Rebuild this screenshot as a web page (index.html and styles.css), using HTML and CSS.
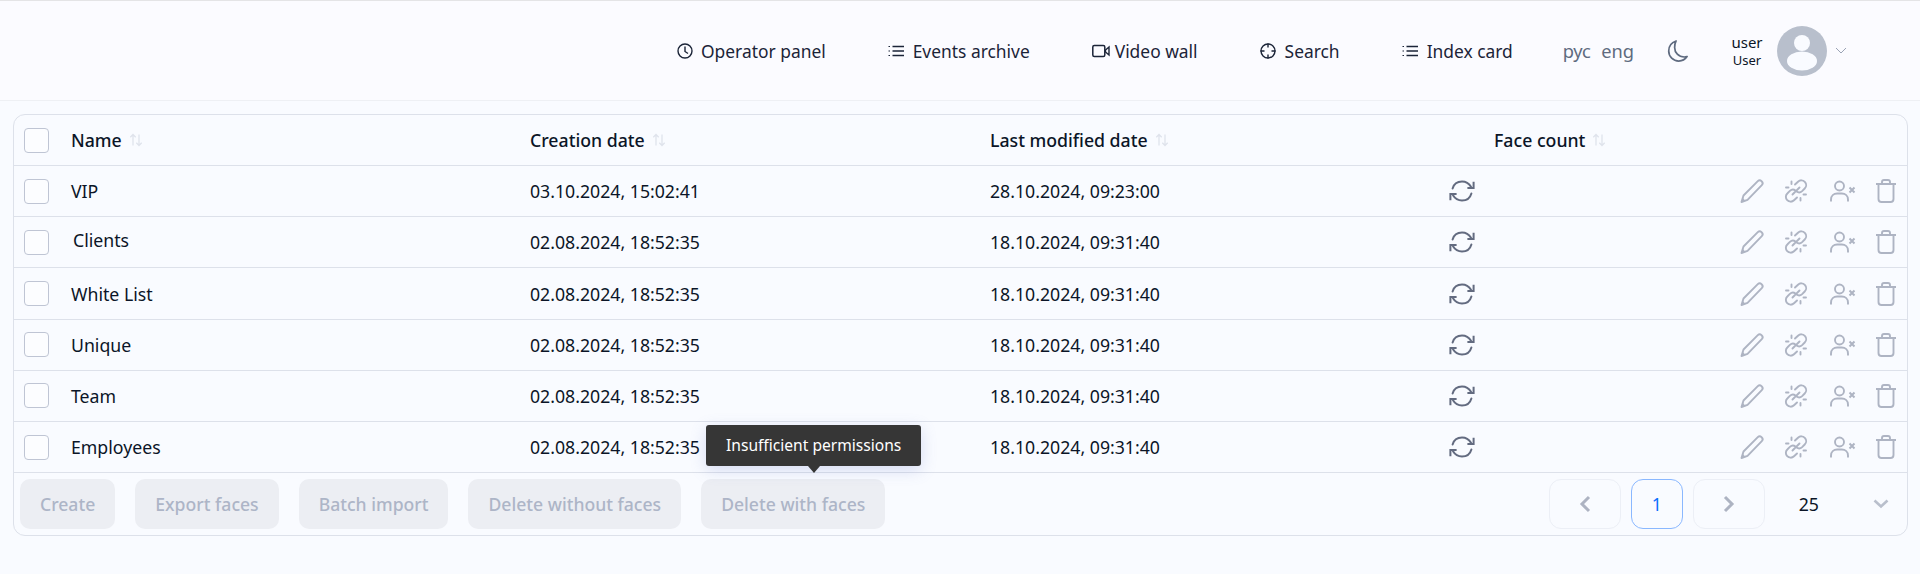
FILE: index.html
```html
<!DOCTYPE html>
<html lang="en">
<head>
<meta charset="utf-8">
<title>Face lists</title>
<link rel="stylesheet" href="styles.css">
</head>
<body>
<svg class="defs" width="0" height="0" aria-hidden="true">
  <symbol id="sort" viewBox="0 0 14 14"><path d="M4 12.5V1.5M1.3 4.2 4 1.5l2.7 2.7M10 1.5v11M7.3 9.8 10 12.5l2.7-2.7" fill="none" stroke="currentColor" stroke-width="1.3"/></symbol>
  <symbol id="sync" viewBox="0 0 26 22"><path d="M3.6 8.6C4.8 4.3 8.6 1.6 13 1.6c3.800 0 7 1.900 9 5.200M22.400 13.400c-1.200 4.300-5 7-9.400 7-3.800 0-7-1.900-9-5.200" fill="none" stroke="currentColor" stroke-width="2" stroke-linecap="round"/><path d="M24.600 1.800v6.200h-6.200M1.400 20.200v-6.200h6.200" fill="none" stroke="currentColor" stroke-width="2"/></symbol>
  <symbol id="pencil" viewBox="0 0 24 24"><path d="M1.500 23 3.500 16.500 17.800 2.200c1-1 2.700-1 3.700 0l.3.300c1 1 1 2.700 0 3.700L7.500 20.800z" fill="none" stroke="currentColor" stroke-width="1.900" stroke-linejoin="round"/><path d="M1.500 23 3 19l2 2.500z" fill="currentColor"/></symbol>
  <symbol id="unlink" viewBox="0 0 24 24"><path d="M11 5.500 14 2.700c2-1.900 5-1.800 6.800.1 1.800 1.900 1.800 4.900-.1 6.700l-2.600 2.600c-1.700 1.600-4 1.500-5.600.4M13 18.500 10 21.300c-2 1.900-5 1.800-6.800-.1-1.800-1.900-1.800-4.900.1-6.700l2.600-2.600c1.700-1.600 4-1.500 5.600-.4M15.500 8.500l-2.500 2.500M8.500 15.500l2.500-2.500M7.500 2.500V5M2 8.500h2.500M16.500 19v2.500M19.500 15.500H22" fill="none" stroke="currentColor" stroke-width="1.900" stroke-linecap="round" stroke-linejoin="round"/></symbol>
  <symbol id="userx" viewBox="0 0 26 22"><circle cx="9.500" cy="6" r="4.500" fill="none" stroke="currentColor" stroke-width="1.900"/><path d="M1 21.500v-2c0-3.600 2.700-6 6.200-6h4.600c3.500 0 6.200 2.400 6.200 6v2" fill="none" stroke="currentColor" stroke-width="1.900"/><path d="m19.500 7.500 5 5M24.500 7.500l-5 5" fill="none" stroke="currentColor" stroke-width="2"/></symbol>
  <symbol id="trash" viewBox="0 0 20 24"><path d="M2.500 5.500V20c0 1.700 1.300 3 3 3h9c1.700 0 3-1.300 3-3V5.500M0 5h20M6 4.500V3c0-1.100.9-2 2-2h4c1.100 0 2 .9 2 2v1.500" fill="none" stroke="currentColor" stroke-width="1.900"/></symbol>
  <symbol id="list" viewBox="0 0 16 12"><path d="M4.500 1.500H16M4.500 6H16M4.500 10.500H16" fill="none" stroke="currentColor" stroke-width="1.300"/><path d="M.5 1h1.500v1H.5zM.5 5.500h1.500v1H.5zM.5 10h1.500v1H.5z" fill="currentColor"/></symbol>
</svg>

<header class="topbar">
  <nav class="nav">
    <a class="nav-item nav-operator"><svg class="ic-nav" viewBox="0 0 16 16"><circle cx="8" cy="8" r="7" fill="none" stroke="currentColor" stroke-width="1.400"/><path d="M8 3.500V8.500L11 10.500" fill="none" stroke="currentColor" stroke-width="1.400"/></svg>Operator panel</a>
    <a class="nav-item nav-events"><svg class="ic-list"><use href="#list"/></svg>Events archive</a>
    <a class="nav-item nav-video"><svg class="ic-video" viewBox="0 0 18 14"><rect x=".8" y="1.500" width="12" height="11" rx="1.500" fill="none" stroke="currentColor" stroke-width="1.500"/><path d="M17 3v8l-3.500-3V6z" fill="none" stroke="currentColor" stroke-width="1.400"/></svg>Video wall</a>
    <a class="nav-item nav-search"><svg class="ic-search" viewBox="0 0 16 16"><circle cx="8" cy="8" r="7" fill="none" stroke="currentColor" stroke-width="1.400"/><path d="M8 .5v4M8 11.500v4M.5 8h4M11.500 8h4" fill="none" stroke="currentColor" stroke-width="1.400"/></svg>Search</a>
    <a class="nav-item nav-index"><svg class="ic-list"><use href="#list"/></svg>Index card</a>
  </nav>
  <div class="langs"><span>рус</span><span>eng</span></div>
  <svg class="moon" viewBox="0 0 22 24"><path d="M9.500 1.500C5 3 1.800 7 1.800 12c0 6 4.800 10.500 10.500 10.500 3.800 0 6.800-1.800 8.700-4.700-1 .3-2 .5-3 .5-5.800 0-10-4.500-10-10 0-2.500.5-4.800 1.500-6.800z" fill="none" stroke="currentColor" stroke-width="1.800" stroke-linejoin="round"/></svg>
  <div class="user"><div class="user-name">user</div><div class="user-role">User</div></div>
  <svg class="avatar" viewBox="0 0 50 50"><circle cx="25" cy="25" r="25" fill="#b8bfcc"/><circle cx="25" cy="17" r="8" fill="#f9fbff"/><ellipse cx="25" cy="35" rx="15" ry="9.500" fill="#f9fbff"/></svg>
  <svg class="user-chevron" viewBox="0 0 12 7"><path d="M1 1l5 5 5-5" fill="none" stroke="currentColor" stroke-width="1"/></svg>
</header>

<main class="main">
  <section class="panel">
    <div class="row head">
      <span class="check"></span>
      <span class="cell c-name">Name<svg class="sort"><use href="#sort"/></svg></span>
      <span class="cell c-created">Creation date<svg class="sort"><use href="#sort"/></svg></span>
      <span class="cell c-modified">Last modified date<svg class="sort"><use href="#sort"/></svg></span>
      <span class="cell c-count">Face count<svg class="sort"><use href="#sort"/></svg></span>
    </div>

    <div class="row">
      <span class="check"></span><span class="cell c-name">VIP</span><span class="cell c-created">03.10.2024, 15:02:41</span><span class="cell c-modified">28.10.2024, 09:23:00</span>
      <svg class="sync"><use href="#sync"/></svg>
      <span class="actions"><svg class="a-pencil"><use href="#pencil"/></svg><svg class="a-unlink"><use href="#unlink"/></svg><svg class="a-user"><use href="#userx"/></svg><svg class="a-trash"><use href="#trash"/></svg></span>
    </div>
    <div class="row">
      <span class="check"></span><span class="cell c-name name-shift">Clients</span><span class="cell c-created">02.08.2024, 18:52:35</span><span class="cell c-modified">18.10.2024, 09:31:40</span>
      <svg class="sync"><use href="#sync"/></svg>
      <span class="actions"><svg class="a-pencil"><use href="#pencil"/></svg><svg class="a-unlink"><use href="#unlink"/></svg><svg class="a-user"><use href="#userx"/></svg><svg class="a-trash"><use href="#trash"/></svg></span>
    </div>
    <div class="row">
      <span class="check"></span><span class="cell c-name">White List</span><span class="cell c-created">02.08.2024, 18:52:35</span><span class="cell c-modified">18.10.2024, 09:31:40</span>
      <svg class="sync"><use href="#sync"/></svg>
      <span class="actions"><svg class="a-pencil"><use href="#pencil"/></svg><svg class="a-unlink"><use href="#unlink"/></svg><svg class="a-user"><use href="#userx"/></svg><svg class="a-trash"><use href="#trash"/></svg></span>
    </div>
    <div class="row">
      <span class="check"></span><span class="cell c-name">Unique</span><span class="cell c-created">02.08.2024, 18:52:35</span><span class="cell c-modified">18.10.2024, 09:31:40</span>
      <svg class="sync"><use href="#sync"/></svg>
      <span class="actions"><svg class="a-pencil"><use href="#pencil"/></svg><svg class="a-unlink"><use href="#unlink"/></svg><svg class="a-user"><use href="#userx"/></svg><svg class="a-trash"><use href="#trash"/></svg></span>
    </div>
    <div class="row">
      <span class="check"></span><span class="cell c-name">Team</span><span class="cell c-created">02.08.2024, 18:52:35</span><span class="cell c-modified">18.10.2024, 09:31:40</span>
      <svg class="sync"><use href="#sync"/></svg>
      <span class="actions"><svg class="a-pencil"><use href="#pencil"/></svg><svg class="a-unlink"><use href="#unlink"/></svg><svg class="a-user"><use href="#userx"/></svg><svg class="a-trash"><use href="#trash"/></svg></span>
    </div>
    <div class="row">
      <span class="check"></span><span class="cell c-name">Employees</span><span class="cell c-created">02.08.2024, 18:52:35</span><span class="cell c-modified">18.10.2024, 09:31:40</span>
      <svg class="sync"><use href="#sync"/></svg>
      <span class="actions"><svg class="a-pencil"><use href="#pencil"/></svg><svg class="a-unlink"><use href="#unlink"/></svg><svg class="a-user"><use href="#userx"/></svg><svg class="a-trash"><use href="#trash"/></svg></span>
    </div>

    <div class="footer">
      <button class="btn">Create</button>
      <button class="btn">Export faces</button>
      <button class="btn">Batch import</button>
      <button class="btn">Delete without faces</button>
      <span class="tip-anchor">
        <button class="btn">Delete with faces</button>
        <span class="tooltip">Insufficient permissions</span>
      </span>
      <div class="pager">
        <button class="page page-nav"><svg class="pg-arrow" viewBox="0 0 12 18"><path d="M10 2 3 9l7 7" fill="none" stroke="currentColor" stroke-width="3"/></svg></button>
        <button class="page page-current">1</button>
        <button class="page page-nav"><svg class="pg-arrow" viewBox="0 0 12 18"><path d="m2 2 7 7-7 7" fill="none" stroke="currentColor" stroke-width="3"/></svg></button>
        <span class="page-size">25</span>
        <svg class="size-chevron" viewBox="0 0 16 10"><path d="m1.500 1.500 6.500 6 6.500-6" fill="none" stroke="currentColor" stroke-width="2.600"/></svg>
      </div>
    </div>
  </section>
</main>
</body>
</html>
```
FILE: styles.css
```css
* { box-sizing: border-box; }
html, body { margin: 0; height: 100%; }
body {
  background: #f9fbff;
  font-family: "Noto Sans", "Open Sans", sans-serif;
  font-size: 17.7px;
  color: #0b1527;
  overflow: hidden;
}
.defs { position: absolute; }

.topbar {
  height: 101px;
  display: flex;
  align-items: center;
  background: #fbfbff;
  border-top: 1px solid #e4e4e6;
  border-bottom: 1px solid #eef0f4;
  padding-left: 677px;
  color: #1b2438;
  font-size: 17.4px;
}
.nav { display: flex; align-items: center; }
.nav-item { display: flex; align-items: center; white-space: nowrap; }
.nav-events { margin-left: 62px; }
.nav-video { margin-left: 62px; }
.nav-search { margin-left: 62px; }
.nav-index { margin-left: 62px; }
.ic-nav { width: 16px; height: 16px; margin-right: 8px; }
.ic-search { width: 16px; height: 16px; margin-right: 9px; }
.ic-list { width: 16px; height: 12px; margin-right: 9px; }
.ic-video { width: 18px; height: 14px; margin-right: 5px; }
.langs { display: flex; gap: 10px; margin-left: 50px; color: #5f6b80; font-size: 18.3px; }
.moon { width: 21px; height: 24px; margin-left: 33px; color: #5f6b80; }
.user { width: 46px; margin-left: 36px; text-align: center; color: #0b1527; }
.user-name { font-size: 15px; line-height: 20px; }
.user-role { font-size: 13px; line-height: 17px; }
.avatar { width: 50px; height: 50px; margin-left: 7px; }
.user-chevron { width: 12px; height: 7px; margin-left: 8px; color: #9aa3b5; }

.main { padding: 13px 12px 0 13px; }
.panel {
  border: 1px solid #dde1ea;
  border-radius: 12px;
}
.row {
  height: 51.17px;
  display: flex;
  align-items: center;
  border-bottom: 1px solid #dde1ea;
  padding-left: 10px;
  position: relative;
}
.check {
  flex: none;
  width: 25px;
  height: 25px;
  border: 1px solid #bfc5d4;
  border-radius: 4px;
  background: #fcfdff;
}
.cell { flex: none; display: flex; align-items: center; white-space: pre; }
.c-name { width: 459px; margin-left: 22px; }
.c-created { width: 460px; }
.c-modified { width: 459px; }
.c-count { width: 300px; margin-left: 45px; }
.head .cell { font-weight: 500; }
.name-shift { padding-left: 2px; position: relative; top: -2px; }
.sort { width: 14px; height: 14px; margin-left: 7px; color: #dfe3ec; }
.sync { flex: none; width: 26px; height: 22px; color: #636b80; }
.actions {
  display: flex;
  align-items: center;
  margin-left: auto;
  padding-right: 11px;
  color: #aeb4c3;
}
.a-pencil { width: 24px; height: 24px; }
.a-unlink { width: 24px; height: 24px; margin-left: 20px; }
.a-user { width: 26px; height: 22px; margin-left: 22px; }
.a-trash { width: 20px; height: 24px; margin-left: 20px; }

.footer {
  display: flex;
  align-items: center;
  height: 62px;
  padding: 0 18px 0 6px;
  gap: 20px;
}
.btn {
  height: 50px;
  padding: 0 20px;
  border: 0;
  border-radius: 10px;
  background: #eceef3;
  color: #adb5c7;
  font: 500 17.6px "Noto Sans", sans-serif;
  white-space: nowrap;
}
.tip-anchor { position: relative; display: block; height: 50px; }
.tooltip {
  position: absolute;
  left: 5px;
  top: -54px;
  width: 215px;
  height: 41px;
  background: #363636;
  color: #fff;
  border-radius: 3px;
  font-size: 15.6px;
  line-height: 41px;
  text-align: center;
  white-space: nowrap;
  box-shadow: 0 4px 16px rgba(90, 110, 200, .22);
}
.tooltip::after {
  content: "";
  position: absolute;
  left: 102px;
  bottom: -7px;
  border-left: 6px solid transparent;
  border-right: 6px solid transparent;
  border-top: 7px solid #363636;
}
.pager { display: flex; align-items: center; margin-left: auto; }
.page {
  height: 50px;
  background: transparent;
  border: 1px solid #eceff6;
  border-radius: 12px;
  display: flex;
  align-items: center;
  justify-content: center;
  padding: 0;
  font: 17.6px "Noto Sans", sans-serif;
}
.page-nav { width: 72px; color: #adb3c2; }
.page-current { width: 52px; margin: 0 10px; border-color: #8ab8ff; color: #0d6efd; }
.pg-arrow { width: 12px; height: 18px; }
.page-size { margin-left: 34px; }
.size-chevron { width: 16px; height: 10px; margin-left: 54px; margin-right: 0; color: #b9bfcc; }
```
